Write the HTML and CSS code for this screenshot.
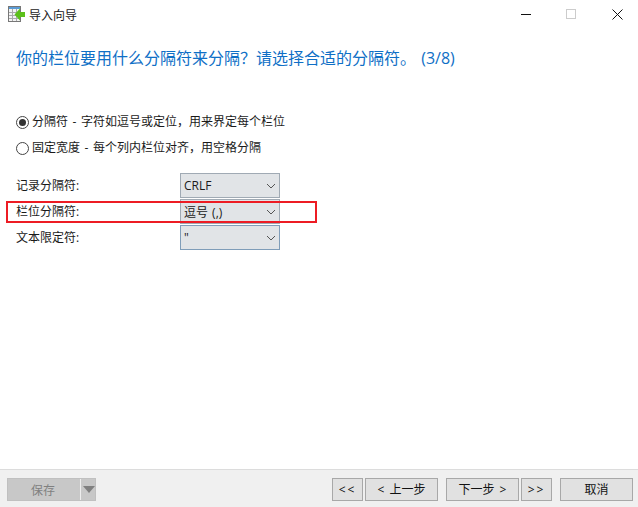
FILE: index.html
```html
<!DOCTYPE html>
<html lang="zh-CN">
<head>
  <meta charset="UTF-8">
  <title>导入向导</title>
  <link rel="stylesheet" href="styles.css">
</head>
<body>
  <div class="window">
    <div class="titlebar">
      <svg class="app-icon" width="17" height="16" viewBox="0 0 17 16">
        <rect x="0.5" y="0.5" width="12" height="15" fill="#f4f4f4" stroke="#777"/>
        <rect x="1" y="1" width="11" height="2" fill="#5a9bd5"/>
        <path d="M1 6.500h11M1 9.500h11M1 12.500h11M4.500 3v12M8.500 3v12" stroke="#aaa" fill="none"/>
        <path d="M17 6v5h-5v3.500L6.500 8.500 12 2.500V6z" fill="#5cc01a"/>
      </svg>
      <span class="title">导入向导</span>
      <div class="win-controls">
        <svg class="win-btn" width="46" height="30" viewBox="0 0 46 30"><path d="M21 14.500h10" stroke="#111"/></svg>
        <svg class="win-btn" width="46" height="30" viewBox="0 0 46 30"><rect x="20.500" y="9.500" width="9" height="9" fill="none" stroke="#ccc"/></svg>
        <svg class="win-btn" width="46" height="30" viewBox="0 0 46 30"><path d="M20.500 9.500l10 10M30.500 9.500l-10 10" stroke="#111"/></svg>
      </div>
    </div>

    <main class="content">
      <h1 class="heading">你的栏位要用什么分隔符来分隔？请选择合适的分隔符。 (3/8)</h1>

      <div class="radios">
        <div class="radio-row">
          <span class="radio checked"></span>
          <span class="radio-label">分隔符 - 字符如逗号或定位，用来界定每个栏位</span>
        </div>
        <div class="radio-row">
          <span class="radio"></span>
          <span class="radio-label">固定宽度 - 每个列内栏位对齐，用空格分隔</span>
        </div>
      </div>

      <div class="fields">
        <div class="field">
          <span class="field-label">记录分隔符:</span>
          <div class="select"><span>CRLF</span><svg width="10" height="6" viewBox="0 0 10 6"><path d="M1 1l4 4 4-4" fill="none" stroke="#555"/></svg></div>
        </div>
        <div class="field marked">
          <span class="field-label">栏位分隔符:</span>
          <div class="select"><span>逗号 (,)</span><svg width="10" height="6" viewBox="0 0 10 6"><path d="M1 1l4 4 4-4" fill="none" stroke="#555"/></svg></div>
        </div>
        <div class="field">
          <span class="field-label">文本限定符:</span>
          <div class="select focused"><span>"</span><svg width="10" height="6" viewBox="0 0 10 6"><path d="M1 1l4 4 4-4" fill="none" stroke="#555"/></svg></div>
        </div>
      </div>
    </main>

    <footer class="footer">
      <div class="save-btn">
        <span class="save-label">保存</span>
        <span class="save-arrow"></span>
      </div>
      <div class="nav">
        <button class="btn small">&lt;&lt;</button>
        <button class="btn">&lt; 上一步</button>
        <button class="btn next">下一步 &gt;</button>
        <button class="btn small">&gt;&gt;</button>
        <button class="btn cancel">取消</button>
      </div>
    </footer>
  </div>
</body>
</html>
```

FILE: styles.css
```css
body, html {
  padding: 0;
  margin: 0;
}
body {
  background-color: #fff;
  color: #1a1a1a;
  font-family: "Open Sans", "Noto Sans CJK SC", sans-serif;
  font-size: 12px;
}
.window {
  width: 638px;
  height: 507px;
  display: flex;
  flex-direction: column;
  overflow: hidden;
}
.titlebar {
  height: 30px;
  display: flex;
  align-items: center;
  padding-left: 8px;
  flex-shrink: 0;
}
.app-icon {
  margin: 0 4px 2px 0;
}
.title {
  line-height: 30px;
  padding-top: 1px;
}
.win-controls {
  margin-left: auto;
  display: flex;
}
.win-btn {
  display: block;
}
.content {
  flex-grow: 1;
  padding: 17px 0 0 16px;
}
.heading {
  margin: 0;
  font-size: 16px;
  font-weight: 400;
  line-height: 22px;
  color: #0f6fc6;
  word-spacing: 1px;
}
.radios {
  margin-top: 44px;
  display: flex;
  flex-direction: column;
  gap: 8px;
}
.radio-row {
  display: flex;
  align-items: center;
  gap: 3px;
  height: 18px;
  word-spacing: 1.500px;
}
.radio-label {
  padding-bottom: 2px;
}
.radio {
  width: 13px;
  height: 13px;
  box-sizing: border-box;
  border: 1px solid #444;
  border-radius: 50%;
  background: #fff;
  display: flex;
  align-items: center;
  justify-content: center;
  flex-shrink: 0;
}
.radio.checked::before {
  content: "";
  width: 7px;
  height: 7px;
  border-radius: 50%;
  background: #333;
}
.fields {
  margin-top: 16px;
  display: flex;
  flex-direction: column;
  gap: 1px;
}
.field {
  display: flex;
  align-items: center;
  height: 25px;
  position: relative;
}
.field-label {
  width: 164px;
  padding-bottom: 2px;
}
.field.marked::after {
  content: "";
  position: absolute;
  left: -10px;
  top: 2px;
  width: 307px;
  height: 18px;
  border: 2px solid #ed1c24;
}
.select {
  width: 92px;
  height: 23px;
  border: 1px solid #a0aab4;
  background: #e1e4e7;
  display: flex;
  align-items: center;
  justify-content: space-between;
  padding: 0 3px;
  word-spacing: 1px;
}
.select.focused {
  border-color: #7f9db9;
}
.footer {
  height: 38px;
  box-sizing: border-box;
  flex-shrink: 0;
  background: #f0f0f0;
  border-top: 1px solid #dcdcdc;
  display: flex;
  align-items: flex-start;
  justify-content: space-between;
  padding: 8px 5px 0 7px;
}
.save-btn {
  width: 87px;
  height: 21px;
  border: 1px solid #c0c0c0;
  background: #c8c8c8;
  display: flex;
  align-items: center;
  color: #808080;
}
.save-label {
  width: 70px;
  padding-right: 2px;
  text-align: center;
}
.save-arrow {
  height: 100%;
  border-left: 1px solid #eee;
  flex-grow: 1;
  position: relative;
}
.save-arrow::after {
  content: "";
  position: absolute;
  left: 2px;
  top: 7px;
  border-left: 6px solid transparent;
  border-right: 6px solid transparent;
  border-top: 7px solid #808080;
}
.nav {
  display: flex;
  gap: 2px;
}
.btn {
  width: 73px;
  height: 23px;
  padding: 0;
  border: 1px solid #a8a8a8;
  background: #e1e1e1;
  color: #111;
  font-family: inherit;
  font-size: 12px;
  line-height: 21px;
  word-spacing: 2px;
}
.btn.small {
  width: 31px;
  letter-spacing: 2px;
}
.next {
  margin-left: 6px;
}
.cancel {
  margin-left: 6px;
}
```
